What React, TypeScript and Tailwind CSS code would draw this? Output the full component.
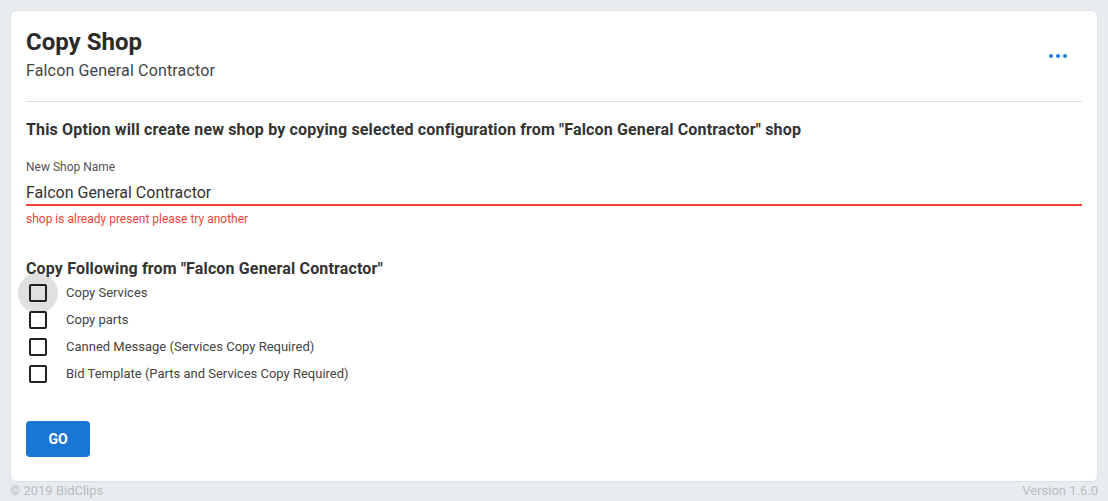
import React from "react";

const items = [
  "Copy Services",
  "Copy parts",
  "Canned Message (Services Copy Required)",
  "Bid Template (Parts and Services Copy Required)",
];

export default function App() {
  return (
    <div
      className="w-[1108px] h-[501px] bg-[#e8ecf1] px-[10px] pt-[10px] flex flex-col text-[#333]"
      style={{ fontFamily: "Roboto, 'Liberation Sans', sans-serif" }}
    >
      <div className="h-[472px] bg-white rounded-[6px] border border-[#dde1e6] px-[15px] flex flex-col">
        <div className="flex justify-between items-start pt-[16px] h-[91px] border-b border-[#dedede]">
          <div>
            <div className="text-[24px] font-bold leading-[30px] text-[#2b2b2b]">Copy Shop</div>
            <div className="text-[16px] leading-[20px] mt-[4px] text-[#444] tracking-[0.15px]">Falcon General Contractor</div>
          </div>
          <div className="flex gap-[3px] mt-[27px] mr-[15px]">
            <span className="w-[4px] h-[4px] rounded-full bg-[#1e7ee0]" />
            <span className="w-[4px] h-[4px] rounded-full bg-[#1e7ee0]" />
            <span className="w-[4px] h-[4px] rounded-full bg-[#1e7ee0]" />
          </div>
        </div>
        <div className="text-[16px] font-bold mt-[18px] leading-[20px] text-[#333] tracking-[0.15px]">
          This Option will create new shop by copying selected configuration from "Falcon General Contractor" shop
        </div>
        <div className="mt-[20px] text-[12px] leading-[14px] text-[#555]">New Shop Name</div>
        <div className="mt-[9px] text-[16px] leading-[20px] text-[#333] pb-[1px] border-b-2 border-[#f44336]">
          Falcon General Contractor
        </div>
        <div className="mt-[6px] text-[12px] leading-[14px] text-[#f44336]">shop is already present please try another</div>
        <div className="relative z-10 mt-[33px] text-[16px] font-bold leading-[20px] text-[#333] tracking-[0.15px]">
          Copy Following from "Falcon General Contractor"
        </div>
        <div className="flex flex-col">
          {items.map((t, i) => (
            <div key={t} className="flex items-center h-[27px]">
              <div className="relative w-[24px] h-[24px] flex items-center justify-center">
                {i === 0 && (
                  <span className="absolute left-[-8px] top-[-8px] w-[40px] h-[40px] rounded-full bg-[#e0e0e0]" />
                )}
                <span className="relative w-[18px] h-[18px] border-2 border-[#222] rounded-[2px]" />
              </div>
              <span className="ml-[16px] text-[13px] text-[#444]">{t}</span>
            </div>
          ))}
        </div>
        <button className="mt-[34px] w-[64px] h-[36px] bg-[#1976d2] rounded-[4px] text-white font-bold text-[14px]">
          GO
        </button>
      </div>
      <div className="flex justify-between text-[13px] text-[#b8bcc0] leading-[18px]">
        <span>© 2019 BidClips</span>
        <span>Version 1.6.0</span>
      </div>
    </div>
  );
}
